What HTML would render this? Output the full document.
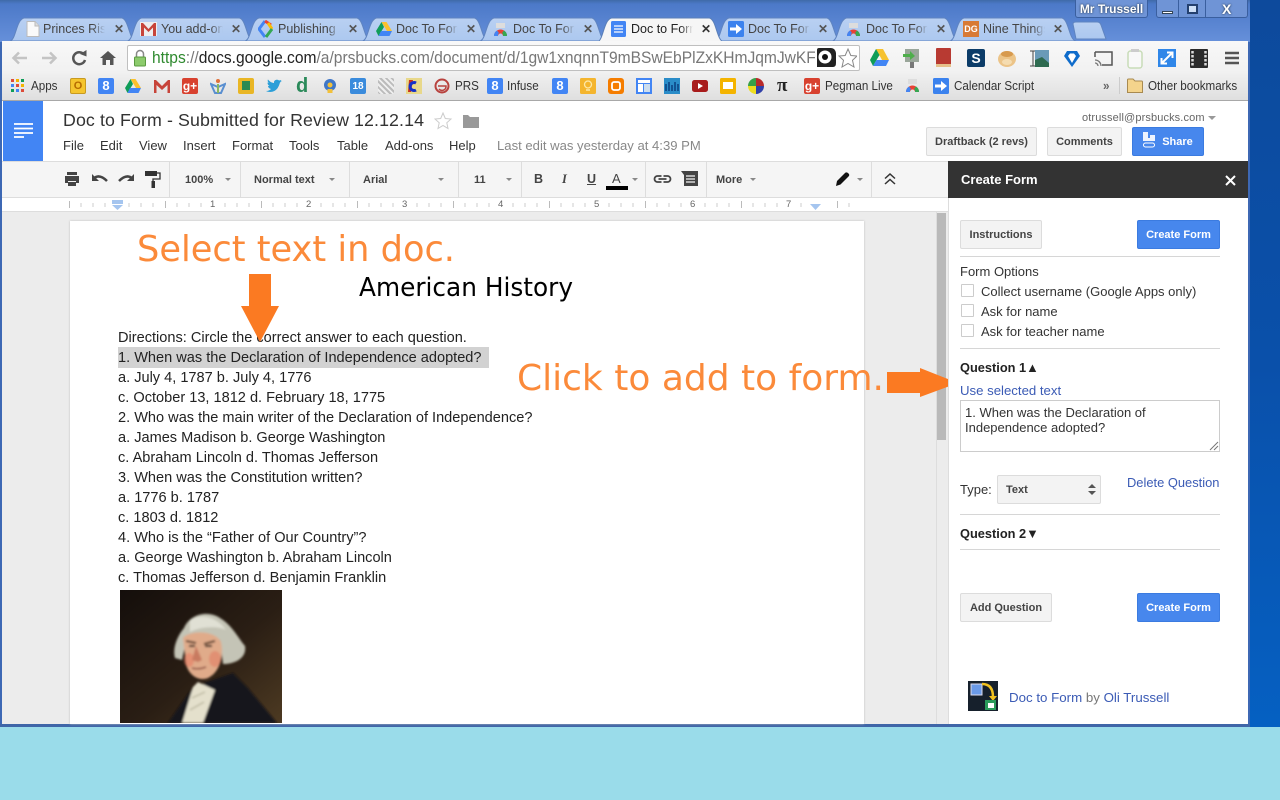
<!DOCTYPE html>
<html><head><meta charset="utf-8">
<style>
*{box-sizing:border-box}
html,body{margin:0;padding:0;width:1280px;height:800px;overflow:hidden;background:#9adcea;font-family:"Liberation Sans",sans-serif}
.a{position:absolute;white-space:nowrap}
.t{position:absolute;white-space:nowrap;line-height:20px;height:20px}
.d{font-size:14.57px;color:#222;left:118px}
.tab{position:absolute;top:21px;font-size:12.5px;color:#444;line-height:16px;width:62px;overflow:hidden;white-space:nowrap;-webkit-mask-image:linear-gradient(90deg,#000 80%,transparent);mask-image:linear-gradient(90deg,#000 80%,transparent)}
.x{position:absolute;top:21px;font-size:12px;font-weight:bold;color:#555;line-height:16px}
.bk{position:absolute;top:78px;font-size:12.5px;color:#333;line-height:16px;white-space:nowrap;transform:scaleX(.93);transform-origin:left center}
.i{position:absolute;width:16px;height:16px;top:78px;border-radius:2px;color:#fff;font-size:13px;font-weight:bold;text-align:center;line-height:16px}
.m{position:absolute;top:136px;font-size:13px;color:#333;line-height:20px}
.tb{position:absolute;top:172px;font-size:11px;font-weight:bold;color:#444;line-height:16px;white-space:nowrap}
.sep{position:absolute;top:161px;width:1px;height:36px;background:#ddd}
.car{position:absolute;top:178px;width:0;height:0;border-left:3px solid transparent;border-right:3px solid transparent;border-top:3px solid #888}
.btn{position:absolute;height:29px;border:1px solid #dcdcdc;background:#f3f3f3;border-radius:2px;font-size:11px;font-weight:bold;color:#444;text-align:center;line-height:28px;white-space:nowrap}
.blue{background:#4787ed;border-color:#3b7be0;color:#fff}
.s{position:absolute;font-size:13px;color:#333;line-height:20px;white-space:nowrap}
.hr{position:absolute;left:960px;width:260px;height:1px;background:#d6d6d6}
.cb{position:absolute;left:961px;width:13px;height:13px;border:1px solid #ccc;background:#fff;border-radius:1px}
.rn{position:absolute;top:199px;font-size:9.5px;color:#666;line-height:12px}
</style></head><body>

<!-- desktop + window frame -->
<div class="a" style="left:1250px;top:0;width:30px;height:727px;background:linear-gradient(180deg,#0d4a9c 0,#0a50aa 50%,#0560c2 100%)"></div>
<div class="a" style="left:0;top:0;width:1250px;height:727px;background:#3d68b4"></div>
<div class="a" style="left:0;top:0;width:1250px;height:42px;background:linear-gradient(180deg,#3f6aa8 0,#4c79c8 4px,#6690da 100%)"></div>
<div class="a" style="left:0;top:724px;width:1250px;height:3px;background:#3f66a8"></div>

<!-- window controls -->
<div class="a" style="left:1075px;top:0;width:73px;height:18px;background:#6f94d6;border:1px solid #3a5f9f;border-top:0;border-radius:0 0 3px 3px;color:#fff;font-size:12px;text-align:center;line-height:18px;font-weight:bold;text-shadow:0 0 2px #123">Mr Trussell</div>
<div class="a" style="left:1156px;top:0;width:92px;height:18px;background:#6f94d6;border:1px solid #3a5f9f;border-top:0;border-radius:0 0 3px 3px"></div>
<div class="a" style="left:1178px;top:0;width:1px;height:17px;background:#3a5f9f"></div>
<div class="a" style="left:1205px;top:0;width:1px;height:17px;background:#3a5f9f"></div>
<div class="a" style="left:1162px;top:11px;width:11px;height:3px;background:#fff;border:1px solid #345"></div>
<div class="a" style="left:1187px;top:4px;width:11px;height:10px;border:2px solid #24406f;background:#cfe0f7"></div>
<div class="a" style="left:1222px;top:1px;color:#fff;font-size:14px;font-weight:bold;line-height:16px;text-shadow:0 0 2px #123">X</div>

<!-- tabs -->
<svg class="a" style="left:0;top:0" width="1280" height="44">
<defs><linearGradient id="tg" x1="0" y1="0" x2="0" y2="1"><stop offset="0" stop-color="#b9d0f2"/><stop offset="1" stop-color="#acc8ef"/></linearGradient></defs>
<g fill="url(#tg)" stroke="#5f84c0" stroke-width="1">
<path d="M10 41C16 40 16 20 24 18H122C129 20 129 40 136 41Z"/>
<path d="M127.500 41C133.500 40 133.500 20 141.500 18H239.500C246.500 20 246.500 40 253.500 41Z"/>
<path d="M245 41C251 40 251 20 259 18H357C364 20 364 40 371 41Z"/>
<path d="M362.500 41C368.500 40 368.500 20 376.500 18H474.500C481.500 20 481.500 40 488.500 41Z"/>
<path d="M480 41C486 40 486 20 494 18H592C599 20 599 40 606 41Z"/>
<path d="M715 41C721 40 721 20 729 18H827C834 20 834 40 841 41Z"/>
<path d="M832.500 41C838.500 40 838.500 20 846.500 18H944.500C951.500 20 951.500 40 958.500 41Z"/>
<path d="M950 41C956 40 956 20 964 18H1062C1069 20 1069 40 1076 41Z"/>
<path d="M1076 39L1073 24Q1073 22 1076 22H1097Q1100 22 1101 25L1106 39Z"/>
</g>
<path d="M597.500 42C603.500 40 603.500 20 611.500 18H709.500C716.500 20 716.500 40 723.500 42Z" fill="#f6f6f6" stroke="#5a7fb8"/>
</svg>
<svg class="a" style="left:26px;top:21px" width="14" height="16"><path d="M1 .5H9L13 5V15.500H1Z" fill="#fafafa" stroke="#bbb"/><path d="M9 .5V5H13" fill="#ddd" stroke="#bbb"/></svg>
<svg class="a" style="left:140px;top:22px" width="17" height="14"><rect width="17" height="14" fill="#eee"/><path d="M1 14V1H3L8.500 7 14 1H16V14H13V5.500L8.500 10 4 5.500V14Z" fill="#c7443a"/></svg>
<svg class="a" style="left:258px;top:20px" width="15" height="18"><path d="M7 1L1 9 7 17" fill="none" stroke="#4285f4" stroke-width="3"/><path d="M7 1L13 5" fill="none" stroke="#e94235" stroke-width="3"/><path d="M10 3L14 9" fill="none" stroke="#fbbc05" stroke-width="3"/><path d="M14 9L8 17" fill="none" stroke="#34a853" stroke-width="3"/></svg>
<svg class="a" style="left:376px;top:22px" width="16" height="14"><path d="M5.500 0H10.500L16 9H11Z" fill="#fbc02d"/><path d="M5.500 0L0 9 2.500 14 8 5Z" fill="#0f9d58"/><path d="M2.500 14H13.500L16 9H5Z" fill="#4285f4"/></svg>
<svg class="a" style="left:493px;top:22px" width="15" height="15"><rect x="3" y="1" width="9" height="5" fill="#ddd"/><path d="M1 14A6.500 6.500 0 0 1 14 14H10A2.500 2.500 0 0 0 5 14Z" fill="#e94235"/><path d="M1 14A6.500 6.500 0 0 1 4 8.500L6 11A3 3 0 0 0 5 14Z" fill="#4285f4"/><path d="M10 14A3 3 0 0 0 9 11L11 8.500A6.500 6.500 0 0 1 14 14Z" fill="#34a853"/></svg>
<svg class="a" style="left:611px;top:21px" width="15" height="16"><rect width="15" height="16" rx="1.500" fill="#4285f4"/><path d="M3 5H12M3 8H12M3 11H12" stroke="#fff" stroke-width="1.300"/></svg>
<svg class="a" style="left:728px;top:21px" width="16" height="16"><rect width="16" height="16" rx="1.500" fill="#3b82ee"/><path d="M2 6.500H8V3L14 8 8 13V9.500H2Z" fill="#fff"/></svg>
<svg class="a" style="left:846px;top:22px" width="15" height="15"><rect x="3" y="1" width="9" height="5" fill="#ddd"/><path d="M1 14A6.500 6.500 0 0 1 14 14H10A2.500 2.500 0 0 0 5 14Z" fill="#e94235"/><path d="M1 14A6.500 6.500 0 0 1 4 8.500L6 11A3 3 0 0 0 5 14Z" fill="#4285f4"/><path d="M10 14A3 3 0 0 0 9 11L11 8.500A6.500 6.500 0 0 1 14 14Z" fill="#34a853"/></svg>
<div class="a" style="left:963px;top:21px;width:16px;height:16px;background:#d87a35;color:#fff;font-size:9px;font-weight:bold;text-align:center;line-height:16px">DG</div>
<div class="tab" style="left:43px">Princes Risb</div><div class="x" style="left:114px">✕</div>
<div class="tab" style="left:161px">You add-on</div><div class="x" style="left:231px">✕</div>
<div class="tab" style="left:278px">Publishing a</div><div class="x" style="left:348px">✕</div>
<div class="tab" style="left:396px">Doc To Form</div><div class="x" style="left:466px">✕</div>
<div class="tab" style="left:513px">Doc To Form</div><div class="x" style="left:583px">✕</div>
<div class="tab" style="left:631px;color:#222">Doc to Form</div><div class="x" style="left:701px;color:#333">✕</div>
<div class="tab" style="left:748px">Doc To Form</div><div class="x" style="left:818px">✕</div>
<div class="tab" style="left:866px">Doc To Form</div><div class="x" style="left:936px">✕</div>
<div class="tab" style="left:983px">Nine Things</div><div class="x" style="left:1053px">✕</div>

<!-- toolbar -->
<div class="a" style="left:2px;top:41px;width:1246px;height:32px;background:linear-gradient(180deg,#f8f8f8,#f1f1f1)"></div>
<div class="a" style="left:2px;top:73px;width:1246px;height:27px;background:linear-gradient(180deg,#f0f0f0,#dfdfdf)"></div>
<div class="a" style="left:2px;top:100px;width:1246px;height:1px;background:#a8a8a8"></div>
<svg class="a" style="left:10px;top:48px" width="110" height="20">
<path d="M17 10H4M9 4.500L3.500 10 9 15.500" fill="none" stroke="#c4c4c4" stroke-width="2.500"/>
<path d="M32 10H45M40 4.500L45.500 10 40 15.500" fill="none" stroke="#c4c4c4" stroke-width="2.500"/>
<path d="M74 6.500A6 6 0 1 0 75 12" fill="none" stroke="#555" stroke-width="2.500"/><path d="M70 6L76.500 8.500V2Z" fill="#555"/>
<path d="M90 10L98 3 106 10H103.500V17H100V12H96V17H92.500V10Z" fill="#555"/>
</svg>
<div class="a" style="left:127px;top:45px;width:733px;height:26px;background:#fff;border:1px solid #bfbfbf;border-radius:2px"></div>
<svg class="a" style="left:133px;top:49px" width="14" height="18"><path d="M3.500 8V5A3.500 3.500 0 0 1 10.500 5V8" fill="none" stroke="#888" stroke-width="1.500"/><rect x="1.500" y="8" width="11" height="9" rx="1" fill="#8ccb6c" stroke="#5a9a40"/></svg>
<div class="a" style="left:152px;top:48px;width:663px;height:20px;overflow:hidden"><div style="font-size:16.400px;line-height:20px;color:#777;transform:scaleX(.95);transform-origin:left center;width:720px"><span style="color:#2f8a2f">https</span>://<span style="color:#222">docs.google.com</span>/a/prsbucks.com/document/d/1gw1xnqnnT9mBSwEbPlZxKHmJqmJwKF</div></div>
<svg class="a" style="left:815px;top:46px" width="42" height="24">
<path d="M2 4Q2 2 4 2H16Q20 2 21 7V17Q21 21 18 21H2Z" fill="#222"/><circle cx="10" cy="11" r="6.500" fill="#fff"/><circle cx="10" cy="11" r="3" fill="#111"/>
<path d="M33 3L35.800 9.500 42 10 37.500 14.300 39 21 33 17.500 27 21 28.500 14.300 24 10 30.200 9.500Z" fill="#fff" stroke="#888"/>
</svg>
<!-- extension icons -->
<svg class="a" style="left:870px;top:48px" width="370" height="22">
<path d="M6 1H13L19 12H12Z" fill="#f6c230"/><path d="M6 1L0 12 3 18 9.500 7Z" fill="#0f9d58"/><path d="M3 18H16L19 12H6.500Z" fill="#4285f4"/>
<g transform="translate(32,0)"><rect x="3" y="1" width="14" height="13" fill="#9aa69a"/><path d="M1 6H8V3L13 8 8 12V9H1Z" fill="#4dae4a"/><rect x="8" y="14" width="4" height="6" fill="#777"/></g>
<g transform="translate(65,0)"><rect x="1" y="0" width="15" height="19" rx="1" fill="#b83a32"/><rect x="1" y="16" width="15" height="3" fill="#e6c08a"/></g>
<g transform="translate(97,1)"><rect width="18" height="18" rx="2" fill="#0c3c68"/><text x="9" y="14" font-size="14" font-weight="bold" fill="#fff" text-anchor="middle" font-family="Liberation Sans">S</text></g>
<g transform="translate(128,1)"><ellipse cx="9" cy="10" rx="9" ry="8" fill="#ecc488"/><ellipse cx="9" cy="5" rx="6" ry="3" fill="#d79a4e"/><ellipse cx="9" cy="13" rx="5" ry="3" fill="#f5dcb0"/></g>
<g transform="translate(160,1)"><path d="M0 2H6M3 2V17M0 17H6" stroke="#444" stroke-width="1" fill="none"/><rect x="5" y="1" width="14" height="17" fill="#6a9ab8"/><path d="M5 18V11L12 8 19 14V18Z" fill="#2e6a50"/></g>
<g transform="translate(193,2)"><path d="M9 17L1 6 4 1H14L17 6Z" fill="#0f6ccb"/><path d="M9 13L5 6 7 3.500H11L13 6Z" fill="#fff"/></g>
<g transform="translate(224,3)"><path d="M1 1H18V14H8" fill="none" stroke="#555" stroke-width="1.500"/><path d="M1 1V6" stroke="#555" stroke-width="1.500"/><path d="M1 9A6 6 0 0 1 7 15M1 12A3 3 0 0 1 4 15" fill="none" stroke="#777" stroke-width="1.300"/></g>
<g transform="translate(256,0)"><rect x="2" y="3" width="14" height="17" rx="2.500" fill="#f8f8f8" stroke="#c8dcb8" stroke-width="1.500"/><rect x="5" y="1" width="8" height="3" fill="#ccc"/></g>
<g transform="translate(288,1)"><rect width="18" height="18" fill="#2f86e8"/><path d="M4 14L14 4M9 3.500H14.500V9M3.500 9V14.500H9" stroke="#fff" stroke-width="2" fill="none"/></g>
<g transform="translate(320,0)"><rect x="0" y="1" width="18" height="19" rx="1" fill="#2b2b2b"/><path d="M2.500 3V18M15.500 3V18" stroke="#ddd" stroke-width="2.500" stroke-dasharray="2.500 1.500"/></g>
<path d="M356 5H370M356 10H370M356 15H370" stroke="#555" stroke-width="2.500" transform="translate(-1,0)"/>
</svg>

<!-- bookmarks -->
<svg class="a" style="left:11px;top:79px" width="14" height="14"><g fill="#dd4b39"><rect width="3" height="3"/></g><rect x="5" width="3" height="3" fill="#f4b400"/><rect x="10" width="3" height="3" fill="#0f9d58"/><rect y="5" width="3" height="3" fill="#4285f4"/><rect x="5" y="5" width="3" height="3" fill="#dd4b39"/><rect x="10" y="5" width="3" height="3" fill="#f4b400"/><rect y="10" width="3" height="3" fill="#0f9d58"/><rect x="5" y="10" width="3" height="3" fill="#4285f4"/><rect x="10" y="10" width="3" height="3" fill="#dd4b39"/></svg>
<div class="bk" style="left:31px">Apps</div>
<div class="i" style="left:70px;background:#f5c52e;color:#b56b00;border:1px solid #c89a20;line-height:14px;font-size:11px">O</div>
<div class="i" style="left:98px;background:#4285f4">8</div>
<svg class="a" style="left:125px;top:79px" width="16" height="14"><path d="M5.500 0H10.500L16 9H11Z" fill="#fbc02d"/><path d="M5.500 0L0 9 2.500 14 8 5Z" fill="#0f9d58"/><path d="M2.500 14H13.500L16 9H5Z" fill="#4285f4"/></svg>
<svg class="a" style="left:154px;top:80px" width="16" height="13"><path d="M0 13V0H2L8 6 14 0H16V13H13.500V5L8 10 2.500 5V13Z" fill="#c7443a"/></svg>
<div class="i" style="left:182px;background:#d8412f;font-size:12px">g+</div>
<svg class="a" style="left:210px;top:78px" width="16" height="16"><circle cx="8" cy="3" r="2" fill="#e0703a"/><path d="M1 6L8 9 15 6 11 15H5Z" fill="none" stroke="#5a8fd0" stroke-width="2"/><path d="M8 6V15" stroke="#8ab860" stroke-width="2"/></svg>
<div class="i" style="left:238px;background:#e9b625"><span style="display:block;width:8px;height:9px;margin:3px auto;background:#2a8a52"></span></div>
<svg class="a" style="left:266px;top:79px" width="16" height="14"><path d="M16 2L14 3.500C13 7 11 13 4 13 2.500 13 1 12.600 0 12 2.500 12 4 11 5 10 3 9.500 2 8 2 7L3.500 7C2 6 1.500 5 1.500 3.500L3 4C1.500 3 1.500 1 2 .5 4 3 6.500 4 8 4 7.500 1 11 0 13 1.500L15.500 1 14.500 2.500Z" fill="#2c9fd8"/></svg>
<div class="a" style="left:296px;top:74px;font-size:20px;line-height:24px;color:#2b8a5a;font-weight:bold">d</div>
<svg class="a" style="left:322px;top:78px" width="16" height="16"><circle cx="8" cy="7" r="6" fill="#3f77c8"/><circle cx="8" cy="7" r="2.500" fill="#f3c13a"/><rect x="5.500" y="11" width="5" height="4" fill="#f3c13a"/></svg>
<div class="i" style="left:350px;background:#3a8bdc;font-size:10px;line-height:18px">18</div>
<div class="i" style="left:378px;background:repeating-linear-gradient(45deg,#bbb 0 2px,#eee 2px 4px)"></div>
<svg class="a" style="left:406px;top:78px" width="16" height="16"><rect width="16" height="16" fill="#e8d88a"/><path d="M3 2H7L5 14H2Z" fill="#c8321e"/><path d="M10 5A4 4 0 1 0 10 12" fill="none" stroke="#1430c8" stroke-width="3"/></svg>
<svg class="a" style="left:434px;top:78px" width="16" height="16"><circle cx="8" cy="8" r="6.500" fill="none" stroke="#b8423e" stroke-width="2"/><path d="M4 8H12A4 4 0 0 1 5 11" fill="none" stroke="#b8423e" stroke-width="1.500"/></svg>
<div class="bk" style="left:455px">PRS</div>
<div class="i" style="left:487px;background:#4285f4">8</div>
<div class="bk" style="left:507px">Infuse</div>
<div class="i" style="left:552px;background:#4285f4">8</div>
<svg class="a" style="left:580px;top:78px" width="16" height="16"><rect width="16" height="16" rx="1.500" fill="#f4b52e"/><circle cx="8" cy="6.500" r="3.500" fill="none" stroke="#fde8a8" stroke-width="1.300"/><path d="M6 12H10" stroke="#fde8a8" stroke-width="1.500"/></svg>
<svg class="a" style="left:608px;top:78px" width="16" height="16"><rect width="16" height="16" rx="3" fill="#f57d00"/><rect x="4" y="4" width="8" height="8" rx="2" fill="none" stroke="#fff" stroke-width="1.800"/></svg>
<svg class="a" style="left:636px;top:78px" width="16" height="16"><rect width="16" height="16" fill="#4285f4"/><rect x="2" y="2" width="12" height="3" fill="#fff"/><rect x="2" y="6" width="5" height="8" fill="#fff"/><rect x="8" y="6" width="6" height="8" fill="#cde"/></svg>
<svg class="a" style="left:664px;top:78px" width="16" height="16"><rect width="16" height="16" fill="#2a8cc8"/><path d="M2 13V6M5 13V4M8 13V7M11 13V4M14 13V6" stroke="#0b3f80" stroke-width="1.500"/></svg>
<svg class="a" style="left:692px;top:80px" width="16" height="12"><rect width="16" height="12" rx="2.500" fill="#a81c1c"/><path d="M6 3L11 6 6 9Z" fill="#fff"/></svg>
<svg class="a" style="left:720px;top:78px" width="16" height="16"><rect width="16" height="16" rx="1.500" fill="#f4b400"/><rect x="3" y="4" width="10" height="7" fill="#fff"/></svg>
<svg class="a" style="left:748px;top:78px" width="16" height="16"><path d="M8 8V0A8 8 0 0 1 16 8Z" fill="#b82a2a"/><path d="M8 8H16A8 8 0 0 1 8 16Z" fill="#3040a8"/><path d="M8 8V16A8 8 0 0 1 0 8Z" fill="#eedd20"/><path d="M8 8H0A8 8 0 0 1 8 0Z" fill="#38a048"/></svg>
<div class="a" style="left:777px;top:75px;font-size:19px;line-height:22px;color:#222;font-family:'Liberation Serif',serif;font-weight:bold">π</div>
<div class="i" style="left:804px;background:#d8412f;font-size:12px">g+</div>
<div class="bk" style="left:825px">Pegman Live</div>
<svg class="a" style="left:905px;top:78px" width="15" height="15"><rect x="3" y="1" width="9" height="5" fill="#ddd"/><path d="M1 14A6.500 6.500 0 0 1 14 14H10A2.500 2.500 0 0 0 5 14Z" fill="#e94235"/><path d="M1 14A6.500 6.500 0 0 1 4 8.500L6 11A3 3 0 0 0 5 14Z" fill="#4285f4"/><path d="M10 14A3 3 0 0 0 9 11L11 8.500A6.500 6.500 0 0 1 14 14Z" fill="#34a853"/></svg>
<svg class="a" style="left:933px;top:78px" width="16" height="16"><rect width="16" height="16" rx="1.500" fill="#3b82ee"/><path d="M2 6.500H8V3L14 8 8 13V9.500H2Z" fill="#fff"/></svg>
<div class="bk" style="left:954px">Calendar Script</div>
<div class="bk" style="left:1103px;font-weight:bold;color:#666">»</div>
<div class="a" style="left:1119px;top:77px;width:1px;height:17px;background:#ccc"></div>
<svg class="a" style="left:1127px;top:78px" width="16" height="15"><path d="M.5 14.500V2Q.5 1 1.500 1H6L8 3H14.500Q15.500 3 15.500 4V14.500Z" fill="#f4d48c" stroke="#a88a50"/></svg>
<div class="bk" style="left:1148px">Other bookmarks</div>

<!-- docs header -->
<div class="a" style="left:2px;top:101px;width:1246px;height:60px;background:#fff"></div>
<div class="a" style="left:3px;top:101px;width:40px;height:60px;background:#4285f4"></div>
<svg class="a" style="left:14px;top:122px" width="20" height="16"><path d="M0 2H19M0 6.500H19M0 11H19M0 15H10" stroke="#fff" stroke-width="1.700"/></svg>
<div class="a" style="left:63px;top:108px;font-size:17.800px;line-height:24px;color:#333;letter-spacing:.1px">Doc to Form - Submitted for Review 12.12.14</div>
<svg class="a" style="left:434px;top:112px" width="50" height="18"><path d="M9 1L11.300 6.500 17 7 12.800 10.800 14 16.500 9 13.500 4 16.500 5.200 10.800 1 7 6.700 6.500Z" fill="#fff" stroke="#ccc"/><path d="M29 3H34L36 5H45V16H29Z" fill="#999"/></svg>
<div class="m" style="left:63px">File</div><div class="m" style="left:100px">Edit</div><div class="m" style="left:139px">View</div><div class="m" style="left:183px">Insert</div><div class="m" style="left:232px">Format</div><div class="m" style="left:289px">Tools</div><div class="m" style="left:337px">Table</div><div class="m" style="left:385px">Add-ons</div><div class="m" style="left:449px">Help</div>
<div class="m" style="left:497px;color:#888;font-size:13.100px">Last edit was yesterday at 4:39 PM</div>
<div class="a" style="left:1082px;top:110px;font-size:11px;line-height:16px;color:#666;letter-spacing:.12px">otrussell@prsbucks.com</div>
<div class="a" style="left:1208px;top:116px;width:0;height:0;border-left:4px solid transparent;border-right:4px solid transparent;border-top:4px solid #999"></div>
<div class="btn" style="left:926px;top:127px;width:111px">Draftback (2 revs)</div>
<div class="btn" style="left:1047px;top:127px;width:75px">Comments</div>
<div class="btn blue" style="left:1132px;top:127px;width:72px;padding-left:19px">Share</div>
<svg class="a" style="left:1142px;top:132px" width="15" height="17"><path d="M1 0H6V6H8V3H13V9H1Z" fill="#fff" opacity=".9"/><rect x="1.500" y="11" width="11" height="4" rx="2" fill="none" stroke="#fff"/></svg>

<!-- doc toolbar -->
<div class="a" style="left:2px;top:161px;width:946px;height:37px;background:#f5f5f5;border-top:1px solid #ddd;border-bottom:1px solid #ddd"></div>
<svg class="a" style="left:64px;top:170px" width="100" height="20">
<path d="M3 2H13V5H3ZM1 6H15V13H12V11H4V13H1ZM4 12H12V16H4Z" fill="#444"/>
<path d="M29 9Q35 3 43 11" fill="none" stroke="#444" stroke-width="2.500"/><path d="M28 4V11H35Z" fill="#444"/>
<path d="M69 9Q63 3 55 11" fill="none" stroke="#444" stroke-width="2.500"/><path d="M70 4V11H63Z" fill="#444"/>
<path d="M81 1H93V6H81Z" fill="#333"/><path d="M93 3H96V9H89V11" fill="none" stroke="#333" stroke-width="1.300"/><rect x="87.500" y="11" width="3.500" height="7" fill="#333"/>
</svg>
<div class="sep" style="left:169px"></div><div class="sep" style="left:240px"></div><div class="sep" style="left:349px"></div><div class="sep" style="left:458px"></div><div class="sep" style="left:521px"></div><div class="sep" style="left:645px"></div><div class="sep" style="left:706px"></div><div class="sep" style="left:871px"></div>
<div class="tb" style="left:185px">100%</div><div class="car" style="left:225px"></div>
<div class="tb" style="left:254px">Normal text</div><div class="car" style="left:329px"></div>
<div class="tb" style="left:363px">Arial</div><div class="car" style="left:438px"></div>
<div class="tb" style="left:474px">11</div><div class="car" style="left:506px"></div>
<div class="a" style="left:534px;top:171px;font-size:12.500px;font-weight:bold;color:#444;line-height:16px">B</div>
<div class="a" style="left:562px;top:171px;font-size:12.500px;font-weight:bold;font-style:italic;color:#444;line-height:16px;font-family:'Liberation Serif',serif">I</div>
<div class="a" style="left:587px;top:171px;font-size:12.500px;font-weight:bold;color:#444;line-height:16px;text-decoration:underline">U</div>
<div class="a" style="left:612px;top:171px;font-size:13px;color:#444;line-height:16px">A</div>
<div class="a" style="left:606px;top:186px;width:22px;height:4px;background:#000"></div>
<div class="car" style="left:632px"></div>
<svg class="a" style="left:653px;top:170px" width="46" height="18">
<path d="M8 5.500H4A3 3 0 0 0 4 11.500H8M10 5.500H14A3 3 0 0 1 14 11.500H10M5 8.500H13" fill="none" stroke="#444" stroke-width="1.800" transform="translate(.5,.5)"/>
<path d="M28 1H45V16H31V5Z" fill="#444"/><path d="M33 6H42M33 9H42M33 12H42" stroke="#f5f5f5" stroke-width="1.200"/>
</svg>
<div class="tb" style="left:716px">More</div><div class="car" style="left:750px"></div>
<svg class="a" style="left:835px;top:171px" width="16" height="16"><path d="M1 15L2 10 10 2Q11.500 .5 13.500 2.500 15 4 13.500 5.500L5.500 13.500Z" fill="#111"/></svg>
<div class="car" style="left:857px"></div>
<svg class="a" style="left:884px;top:172px" width="12" height="14"><path d="M1 6.500L6 2 11 6.500M1 12L6 7.500 11 12" fill="none" stroke="#333" stroke-width="1.500"/></svg>

<!-- ruler -->
<div class="a" style="left:2px;top:198px;width:946px;height:14px;background:#fff;border-bottom:1px solid #ddd"></div>
<svg class="a" style="left:60px;top:198px" width="800" height="14">
<path d="M9.500 3V10M105.500 3V10M201.500 3V10M297.500 3V10M393.500 3V10M489.500 3V10M585.500 3V10M681.500 3V10M777.500 3V10" stroke="#bbb"/>
<path d="M21 5V9M33 5V9M45 5V9M69 5V9M81 5V9M93 5V9M117 5V9M129 5V9M141 5V9M165 5V9M177 5V9M189 5V9M213 5V9M225 5V9M237 5V9M261 5V9M273 5V9M285 5V9M309 5V9M321 5V9M333 5V9M357 5V9M369 5V9M381 5V9M405 5V9M417 5V9M429 5V9M453 5V9M465 5V9M477 5V9M501 5V9M513 5V9M525 5V9M549 5V9M561 5V9M573 5V9M597 5V9M609 5V9M621 5V9M645 5V9M657 5V9M669 5V9M693 5V9M705 5V9M717 5V9M741 5V9M789 5V9M801 5V9" stroke="#ccc"/>
<path d="M52 2H63V6H52ZM52 7H63L57.500 12Z" fill="#a5c5ef"/>
<path d="M750 6H761L755.500 12Z" fill="#a5c5ef"/>
</svg>
<div class="rn" style="left:210px">1</div><div class="rn" style="left:306px">2</div><div class="rn" style="left:402px">3</div><div class="rn" style="left:498px">4</div><div class="rn" style="left:594px">5</div><div class="rn" style="left:690px">6</div><div class="rn" style="left:786px">7</div>

<!-- canvas -->
<div class="a" style="left:2px;top:212px;width:946px;height:512px;background:#ececec"></div>
<div class="a" style="left:936px;top:212px;width:1px;height:512px;background:#ddd"></div>
<div class="a" style="left:937px;top:213px;width:9px;height:227px;background:#b9b9b9"></div>
<div class="a" style="left:70px;top:221px;width:794px;height:503px;background:#fff;box-shadow:0 0 2px #bbb"></div>
<div class="a" style="left:118px;top:347px;width:371px;height:21px;background:#d2d2d2"></div>
<div class="t d" style="top:328px">Directions: Circle the correct answer to each question.</div>
<div class="t d" style="top:348px">1. When was the Declaration of Independence adopted?</div>
<div class="t d" style="top:368px">a. July 4, 1787 b. July 4, 1776</div>
<div class="t d" style="top:388px">c. October 13, 1812 d. February 18, 1775</div>
<div class="t d" style="top:408px">2. Who was the main writer of the Declaration of Independence?</div>
<div class="t d" style="top:428px">a. James Madison b. George Washington</div>
<div class="t d" style="top:448px">c. Abraham Lincoln d. Thomas Jefferson</div>
<div class="t d" style="top:468px">3. When was the Constitution written?</div>
<div class="t d" style="top:488px">a. 1776 b. 1787</div>
<div class="t d" style="top:508px">c. 1803 d. 1812</div>
<div class="t d" style="top:528px">4. Who is the “Father of Our Country”?</div>
<div class="t d" style="top:548px">a. George Washington b. Abraham Lincoln</div>
<div class="t d" style="top:568px">c. Thomas Jefferson d. Benjamin Franklin</div>

<!-- portrait -->
<svg class="a" style="left:120px;top:590px" width="162" height="133" viewBox="0 0 162 133">
<defs>
<linearGradient id="bg" x1="0" y1="0" x2="1" y2="1"><stop offset="0" stop-color="#140e0b"/><stop offset=".55" stop-color="#2a1e14"/><stop offset="1" stop-color="#4d3a22"/></linearGradient>
<filter id="b1"><feGaussianBlur stdDeviation="1"/></filter>
</defs>
<rect width="162" height="133" fill="url(#bg)"/>
<g filter="url(#b1)">
<path d="M48 133L73 97 113 83 127 97 157 133Z" fill="#12121a"/>
<path d="M55 68C52 58 58 45 64 38 70 24 88 20 100 28 113 36 118 48 125 56 127 68 115 74 103 74L100 50 66 52 62 70Z" fill="#c4c4b6"/>
<path d="M70 30C82 23 98 28 106 40 100 36 80 36 70 42Z" fill="#e0e0d4"/>
<path d="M63 48C70 40 95 40 101 52 104 66 100 82 88 88 78 92 68 84 66 74Z" fill="#e0ab8a"/>
<ellipse cx="69" cy="70" rx="5" ry="7" fill="#e87a60" opacity=".55"/><ellipse cx="95" cy="69" rx="6" ry="8" fill="#e27a60" opacity=".55"/>
<path d="M66 51L76 53M84 54L95 51" stroke="#5a3c2c" stroke-width="2"/>
<path d="M69 56H75M85 56H92" stroke="#2a1a14" stroke-width="2"/>
<path d="M76 56L72 70 78 72 82 70Z" fill="#c87a60"/>
<path d="M72 78Q78 80 86 77" stroke="#8a4a3c" stroke-width="1.500" fill="none"/>
<path d="M62 133L73 97 78 92 95 100 83 133Z" fill="#e4e0cc"/>
<path d="M72 108L85 102M70 120L84 112" stroke="#bcb8a0" stroke-width="1.500"/>
</g>
</svg>

<!-- orange annotations -->
<svg class="a" style="left:0;top:0" width="1280" height="800">
<text x="137" y="261" font-family="DejaVu Sans" font-size="36" textLength="318" lengthAdjust="spacingAndGlyphs" fill="#fb8a3a">Select text in doc.</text>
<text x="359" y="296" font-family="DejaVu Sans" font-size="26" textLength="214" lengthAdjust="spacingAndGlyphs" fill="#000">American History</text>
<text x="517" y="390" font-family="DejaVu Sans" font-size="36" textLength="367" lengthAdjust="spacingAndGlyphs" fill="#fb8a3a">Click to add to form.</text>
<path d="M249 274H271V306H279L260 342 241 306H249Z" fill="#fb7a22"/>
<path d="M887 372H920V368L958 383 920 397V393H887Z" fill="#fb7a22"/>
</svg>

<!-- sidebar -->
<div class="a" style="left:948px;top:198px;width:300px;height:526px;background:#fff;border-left:1px solid #ddd"></div>
<div class="a" style="left:948px;top:161px;width:300px;height:37px;background:#333"></div>
<div class="a" style="left:961px;top:171px;font-size:13px;font-weight:bold;color:#fff;line-height:18px">Create Form</div>
<svg class="a" style="left:1225px;top:175px" width="11" height="11"><path d="M1 1L10 10M10 1L1 10" stroke="#fff" stroke-width="2"/></svg>
<div class="btn" style="left:960px;top:220px;width:82px">Instructions</div>
<div class="btn blue" style="left:1137px;top:220px;width:83px">Create Form</div>
<div class="hr" style="top:256px"></div>
<div class="s" style="left:960px;top:262px">Form Options</div>
<div class="cb" style="top:284px"></div><div class="s" style="left:981px;top:282px">Collect username (Google Apps only)</div>
<div class="cb" style="top:304px"></div><div class="s" style="left:981px;top:302px">Ask for name</div>
<div class="cb" style="top:324px"></div><div class="s" style="left:981px;top:322px">Ask for teacher name</div>
<div class="hr" style="top:348px"></div>
<div class="s" style="left:960px;top:358px;font-weight:bold;color:#222;font-size:12.800px">Question 1▲</div>
<div class="s" style="left:960px;top:381px;color:#3b5bb5;font-size:13.200px">Use selected text</div>
<div class="a" style="left:960px;top:400px;width:260px;height:52px;border:1px solid #ccc;background:#fff;font-size:13px;color:#333;line-height:15px;padding:4px 4px;white-space:normal">1. When was the Declaration of<br>Independence adopted?</div>
<svg class="a" style="left:1209px;top:441px" width="10" height="10"><path d="M1 9L9 1M5 9L9 5" stroke="#777"/></svg>
<div class="s" style="left:960px;top:480px">Type:</div>
<div class="btn" style="left:997px;top:475px;width:104px;text-align:left;padding-left:8px">Text</div>
<div class="a" style="left:1088px;top:484px;width:0;height:0;border-left:4px solid transparent;border-right:4px solid transparent;border-bottom:4px solid #555"></div>
<div class="a" style="left:1088px;top:491px;width:0;height:0;border-left:4px solid transparent;border-right:4px solid transparent;border-top:4px solid #555"></div>
<div class="s" style="left:1127px;top:473px;color:#3b5bb5;font-size:12.900px">Delete Question</div>
<div class="hr" style="top:514px"></div>
<div class="s" style="left:960px;top:524px;font-weight:bold;color:#222;font-size:12.800px">Question 2▼</div>
<div class="hr" style="top:549px"></div>
<div class="btn" style="left:960px;top:593px;width:92px">Add Question</div>
<div class="btn blue" style="left:1137px;top:593px;width:83px">Create Form</div>
<svg class="a" style="left:968px;top:681px" width="30" height="30"><rect width="30" height="30" fill="#16202c"/><rect x="3" y="3" width="11" height="11" fill="#6a9ae8" stroke="#dde"/><path d="M14 3Q25 3 25 16" fill="none" stroke="#f0c020" stroke-width="2.500"/><path d="M21 15H29L25 20Z" fill="#f0c020"/><rect x="17" y="19" width="11" height="10" fill="#2a9a5a"/><rect x="20" y="22" width="6" height="5" fill="#fff"/></svg>
<div class="s" style="left:1009px;top:688px;font-size:13.300px;color:#777"><span style="color:#3b5bb5">Doc to Form</span> by <span style="color:#3b5bb5">Oli Trussell</span></div>

</body></html>
